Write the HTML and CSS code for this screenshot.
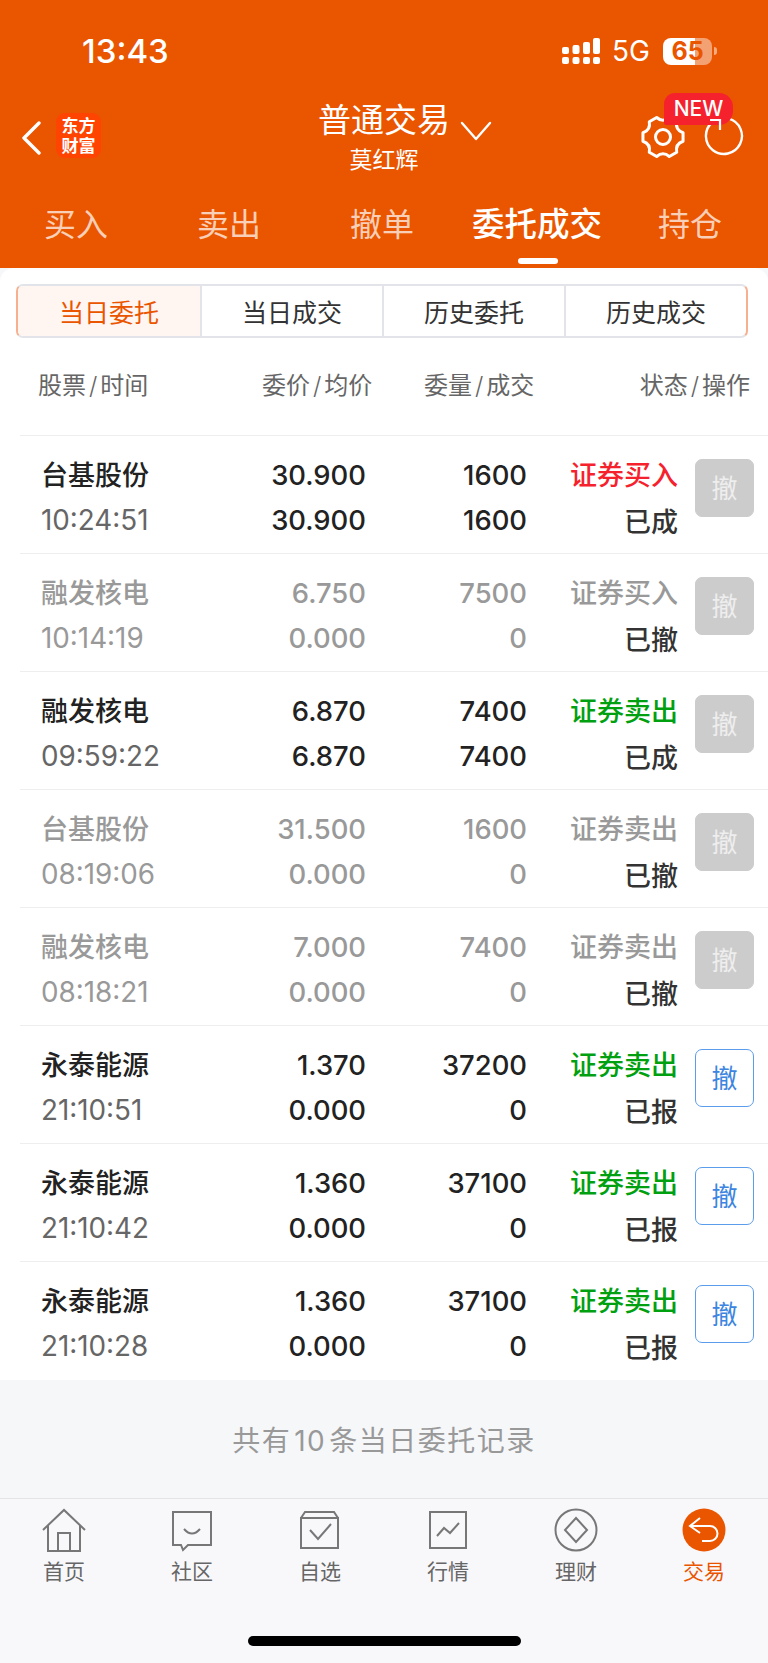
FILE: index.html
```html
<!DOCTYPE html>
<html lang="zh-CN">
<head>
    <meta charset="UTF-8">
    <title>普通交易</title>
    <link rel="stylesheet" href="styles.css">
</head>
<body>
<header class="top">
    <div class="status">
        <span class="clock">13:43</span>
        <div class="status-right">
            <svg class="signal" width="38" height="27" viewBox="0 0 38 27" fill="#fff">
                <rect x="0" y="19" width="7" height="7" rx="2"/><rect x="10.5" y="19" width="7" height="7" rx="2"/><rect x="21" y="19" width="7" height="7" rx="2"/><rect x="31" y="19" width="7" height="7" rx="2"/>
                <rect x="0" y="9" width="7" height="7" rx="2"/><rect x="10.5" y="7" width="7" height="9" rx="2"/><rect x="21" y="4" width="7" height="12" rx="2"/><rect x="31" y="0" width="7" height="16" rx="2"/>
            </svg>
            <span class="net">5G</span>
            <div class="battery">65</div>
            <span class="battery-tip"></span>
        </div>
    </div>
    <div class="nav">
        <div class="nav-left">
            <svg class="back" width="20" height="34" viewBox="0 0 20 34" fill="none" stroke="#fff" stroke-width="3.4" stroke-linecap="round" stroke-linejoin="round"><path d="M18 2 3 17l15 15"/></svg>
            <div class="logo">东方<br>财富</div>
        </div>
        <div class="title">
            <div class="title-main">普通交易
                <svg class="title-arrow" width="32" height="20" viewBox="0 0 32 20" fill="none" stroke="#fff" stroke-width="2.4" stroke-linecap="round" stroke-linejoin="round"><path d="M2 2l14 16L30 2"/></svg>
            </div>
            <div class="title-sub">莫红辉</div>
        </div>
        <div class="nav-right">
            <svg class="gear" width="44" height="44" viewBox="0 -1 44 44" fill="none" stroke="#fff" stroke-width="3" stroke-linejoin="round">
                <path d="M42.05 25.26Q34.12 28 35.72 36.23L28.33 40.5Q22 35 15.67 40.5L8.28 36.23Q9.88 28 1.95 25.26L1.95 16.74Q9.88 14 8.28 5.77L15.67 1.5Q22 7 28.33 1.5L35.72 5.77Q34.12 14 42.05 16.74Z"/>
                <circle cx="22" cy="21" r="7.500"/>
            </svg>
            <svg class="refresh" width="40" height="40" viewBox="0 0 40 40" fill="none" stroke="#fff" stroke-width="2.4"><path d="M25 2.700A18 18 0 1 1 8 6.500"/></svg>
            <span class="badge">NEW</span>
            <svg class="refresh-arrow" width="16" height="16" viewBox="0 0 16 16" fill="none" stroke="#fff" stroke-width="2.2"><path d="M2 2h10v10"/></svg>
        </div>
    </div>
    <nav class="tabs">
        <span>买入</span>
        <span>卖出</span>
        <span>撤单</span>
        <span class="tab-on">委托成交</span>
        <span>持仓</span>
    </nav>
</header>

<main class="card">
    <div class="seg">
        <span class="seg-on">当日委托</span>
        <span>当日成交</span>
        <span>历史委托</span>
        <span>历史成交</span>
    </div>
    <div class="thead">
        <span>股票<i>/</i>时间</span>
        <span>委价<i>/</i>均价</span>
        <span>委量<i>/</i>成交</span>
        <span>状态<i>/</i>操作</span>
    </div>

    <div class="row">
        <span class="name">台基股份</span><span class="val">30.900</span><span class="val">1600</span><span class="type red">证券买入</span>
        <span class="undo">撤</span>
        <span class="time">10:24:51</span><span class="val">30.900</span><span class="val">1600</span><span class="state">已成</span>
    </div>
    <div class="row dim">
        <span class="name">融发核电</span><span class="val">6.750</span><span class="val">7500</span><span class="type">证券买入</span>
        <span class="undo">撤</span>
        <span class="time">10:14:19</span><span class="val">0.000</span><span class="val">0</span><span class="state">已撤</span>
    </div>
    <div class="row">
        <span class="name">融发核电</span><span class="val">6.870</span><span class="val">7400</span><span class="type green">证券卖出</span>
        <span class="undo">撤</span>
        <span class="time">09:59:22</span><span class="val">6.870</span><span class="val">7400</span><span class="state">已成</span>
    </div>
    <div class="row dim">
        <span class="name">台基股份</span><span class="val">31.500</span><span class="val">1600</span><span class="type">证券卖出</span>
        <span class="undo">撤</span>
        <span class="time">08:19:06</span><span class="val">0.000</span><span class="val">0</span><span class="state">已撤</span>
    </div>
    <div class="row dim">
        <span class="name">融发核电</span><span class="val">7.000</span><span class="val">7400</span><span class="type">证券卖出</span>
        <span class="undo">撤</span>
        <span class="time">08:18:21</span><span class="val">0.000</span><span class="val">0</span><span class="state">已撤</span>
    </div>
    <div class="row">
        <span class="name">永泰能源</span><span class="val">1.370</span><span class="val">37200</span><span class="type green">证券卖出</span>
        <span class="undo live">撤</span>
        <span class="time">21:10:51</span><span class="val">0.000</span><span class="val">0</span><span class="state">已报</span>
    </div>
    <div class="row">
        <span class="name">永泰能源</span><span class="val">1.360</span><span class="val">37100</span><span class="type green">证券卖出</span>
        <span class="undo live">撤</span>
        <span class="time">21:10:42</span><span class="val">0.000</span><span class="val">0</span><span class="state">已报</span>
    </div>
    <div class="row">
        <span class="name">永泰能源</span><span class="val">1.360</span><span class="val">37100</span><span class="type green">证券卖出</span>
        <span class="undo live">撤</span>
        <span class="time">21:10:28</span><span class="val">0.000</span><span class="val">0</span><span class="state">已报</span>
    </div>
</main>

<div class="total">共有<i>10</i>条当日委托记录</div>

<footer class="bar">
    <div class="bar-items">
        <div class="bar-item">
            <svg width="44" height="44" viewBox="0 0 44 44" fill="none" stroke="#777" stroke-width="2"><path d="M1 22 22 2l21 20"/><path d="M6 17v26h32V17"/><path d="M16 43V25h12v18"/></svg>
            首页
        </div>
        <div class="bar-item">
            <svg width="44" height="44" viewBox="0 0 44 44" fill="none" stroke="#777" stroke-width="2"><path d="M3 4h38v33H18l-5 5-2-5H3z"/><path d="M14 21q8 9 16 0"/></svg>
            社区
        </div>
        <div class="bar-item">
            <svg width="44" height="44" viewBox="0 0 44 44" fill="none" stroke="#777" stroke-width="2"><path d="M3 10h37v30H3z"/><path d="M3 10l4-6h29l4 6"/><path d="M12 22l8 9 13-15"/></svg>
            自选
        </div>
        <div class="bar-item">
            <svg width="44" height="44" viewBox="0 0 44 44" fill="none" stroke="#777" stroke-width="2"><path d="M4 4h36v36H4z"/><path d="M11 28l7-8 6 5 9-10"/></svg>
            行情
        </div>
        <div class="bar-item">
            <svg width="44" height="44" viewBox="0 0 44 44" fill="none" stroke="#777" stroke-width="2"><circle cx="22" cy="22" r="20.500"/><path d="M22 10l11 12-11 12-11-12z"/></svg>
            理财
        </div>
        <div class="bar-item bar-on">
            <svg width="44" height="44" viewBox="0 0 44 44" fill="none"><circle cx="22" cy="22" r="21.500" fill="#ea5500"/><path d="M18 10 8 18l10 7M8 18h20a7.500 7.500 0 0 1 0 15h-8" stroke="#fff" stroke-width="2"/></svg>
            交易
        </div>
    </div>
    <div class="home-line"></div>
</footer>
</body>
</html>
```

FILE: styles.css
```css
* {
    box-sizing: border-box;
}

body {
    margin: 0;
    width: 768px;
    height: 1663px;
    overflow: hidden;
    display: flex;
    flex-direction: column;
    background-color: #f6f7f9;
    font-family: "Noto Sans CJK SC", "Noto Sans", sans-serif;
    color: #222;
}

i {
    font-style: normal;
    font-family: Inter, sans-serif;
    margin: 0 3px;
    font-weight: 300;
}

/* 顶部橙色区域 */
.top {
    height: 268px;
    background-color: #ea5500;
    color: #fff;
}

.status {
    height: 100px;
    padding: 30px 56px 28px 82px;
    display: flex;
    justify-content: space-between;
    align-items: center;
}

.clock {
    font-family: Inter, sans-serif;
    font-size: 33px;
    font-weight: 500;
}

.status-right {
    display: flex;
    align-items: center;
}

.net {
    font-family: Inter, sans-serif;
    font-size: 28px;
    margin: 0 13px 0 12px;
}

.battery {
    width: 49px;
    height: 27px;
    border-radius: 8px;
    background: linear-gradient(to right, #fff 65%, rgba(255, 255, 255, 0.45) 65%);
    color: #ea5500;
    font-family: Inter, sans-serif;
    font-size: 25px;
    font-weight: 700;
    line-height: 27px;
    text-align: center;
}

.battery-tip {
    width: 3px;
    height: 8px;
    margin-left: 2px;
    margin-right: -5px;
    border-radius: 0 3px 3px 0;
    background-color: rgba(255, 255, 255, 0.5);
}

.nav {
    height: 80px;
    display: grid;
    grid-template-columns: 1fr auto 1fr;
}

.nav-left {
    display: flex;
    align-items: flex-start;
    padding: 19px 0 0 21px;
    gap: 15px;
}

.back {
    margin-top: 2px;
}

.logo {
    width: 45px;
    height: 45px;
    margin-top: -6px;
    padding-top: 2px;
    border-radius: 9px;
    background-color: #ff4300;
    font-size: 17px;
    font-weight: 700;
    line-height: 20px;
    text-align: center;
}

.title {
    margin-top: -2px;
    text-align: center;
}

.title-main {
    position: relative;
    font-size: 33px;
    line-height: 40px;
}

.title-arrow {
    position: absolute;
    left: 142px;
    top: 23px;
}

.title-sub {
    font-size: 23px;
    line-height: 40px;
}

.nav-right {
    position: relative;
    display: flex;
    align-items: flex-start;
    justify-content: flex-end;
    padding: 15px 24px 0 0;
    gap: 19px;
}

.refresh {
    margin-top: 1px;
}

.badge {
    position: absolute;
    right: 35px;
    top: -7px;
    width: 69px;
    height: 32px;
    border-radius: 11px 14px 14px 2px;
    background-color: #f5222d;
    font-family: Inter, sans-serif;
    font-size: 21px;
    font-weight: 500;
    line-height: 32px;
    text-align: center;
}

.refresh-arrow {
    position: absolute;
    right: 44px;
    top: 18px;
}

.tabs {
    margin-top: 17px;
    padding-left: 44px;
    display: grid;
    grid-template-columns: 153px 153px 122px 186px auto;
    font-size: 32px;
    line-height: 50px;
    color: rgba(255, 255, 255, 0.72);
}

.tab-on {
    position: relative;
    color: #fff;
    font-size: 32.500px;
    font-weight: 500;
}

.tab-on::after {
    content: "";
    position: absolute;
    left: 46px;
    top: 61px;
    width: 40px;
    height: 6px;
    border-radius: 3px;
    background-color: #fff;
}

/* 白色卡片 */
.card {
    height: 1112px;
    padding-top: 16px;
    border-radius: 14px 14px 0 0;
    background-color: #fff;
}

.seg {
    height: 54px;
    margin: 0 20px 0 16px;
    display: grid;
    grid-template-columns: repeat(4, 1fr);
    border: 2px solid #e2e4ea;
    border-left-color: #f6b08f;
    border-right-color: #f6b08f;
    border-radius: 7px;
    font-size: 25px;
    line-height: 50px;
    text-align: center;
    color: #333;
    overflow: hidden;
}

.seg span + span {
    border-left: 2px solid #e2e4ea;
}

.seg-on {
    background-color: #fff6f2;
    color: #ea5500;
}

.thead {
    height: 97px;
    padding: 0 18px 6px 38px;
    display: grid;
    grid-template-columns: 224px 162px 1fr auto;
    align-items: center;
    font-size: 24px;
    color: #666;
}

.row {
    margin-left: 20px;
    height: 118px;
    padding: 17px 14px 0 21px;
    border-top: 1px solid #eeeeef;
    display: grid;
    grid-template-columns: 159px 166px 161px 151px 1fr;
    grid-template-rows: 45px 45px;
    align-items: center;
    font-size: 27px;
    line-height: 45px;
}

.name {
    align-self: start;
    line-height: 41px;
    font-weight: 500;
}

.time {
    font-family: Inter, sans-serif;
    font-size: 27.800px;
    color: #666;
}

.val {
    font-family: Inter, sans-serif;
    font-size: 27.400px;
    font-weight: 500;
    text-align: right;
}

.type,
.state {
    text-align: right;
    font-weight: 500;
}

.type {
    align-self: start;
    line-height: 41px;
}

.state {
    color: #333;
}

.red {
    color: #f5222d;
}

.green {
    color: #00a010;
}

.dim .name,
.dim .val,
.dim .type,
.dim .time {
    color: #999;
}

.undo {
    grid-row: 1 / 3;
    grid-column: 5;
    justify-self: end;
    align-self: start;
    width: 59px;
    height: 58px;
    margin-top: 6px;
    border: 1px solid #ccc;
    border-radius: 7px;
    background-color: #ccc;
    color: #eee;
    font-size: 26px;
    line-height: 54px;
    text-align: center;
}

.live {
    background-color: #fff;
    border-color: #5b9cec;
    color: #3d85e0;
}

.total {
    height: 118px;
    font-size: 28px;
    letter-spacing: 1.500px;
    line-height: 118px;
    text-align: center;
    color: #999;
}

.total i {
    margin: 0 3px;
    font-weight: 400;
}

/* 底部导航 */
.bar {
    flex: 1;
    border-top: 1px solid #e4e4e6;
    background-color: #f8f8fb;
}

.bar-items {
    display: grid;
    grid-template-columns: repeat(6, 128px);
    padding-top: 9px;
}

.bar-item {
    display: flex;
    flex-direction: column;
    align-items: center;
    font-size: 21px;
    line-height: 30px;
    color: #666;
}

.bar-item svg {
    margin-bottom: 3px;
}

.bar-on {
    color: #ea5500;
}

.home-line {
    width: 273px;
    height: 10px;
    margin: 51px auto 0;
    border-radius: 5px;
    background-color: #000;
}
```
